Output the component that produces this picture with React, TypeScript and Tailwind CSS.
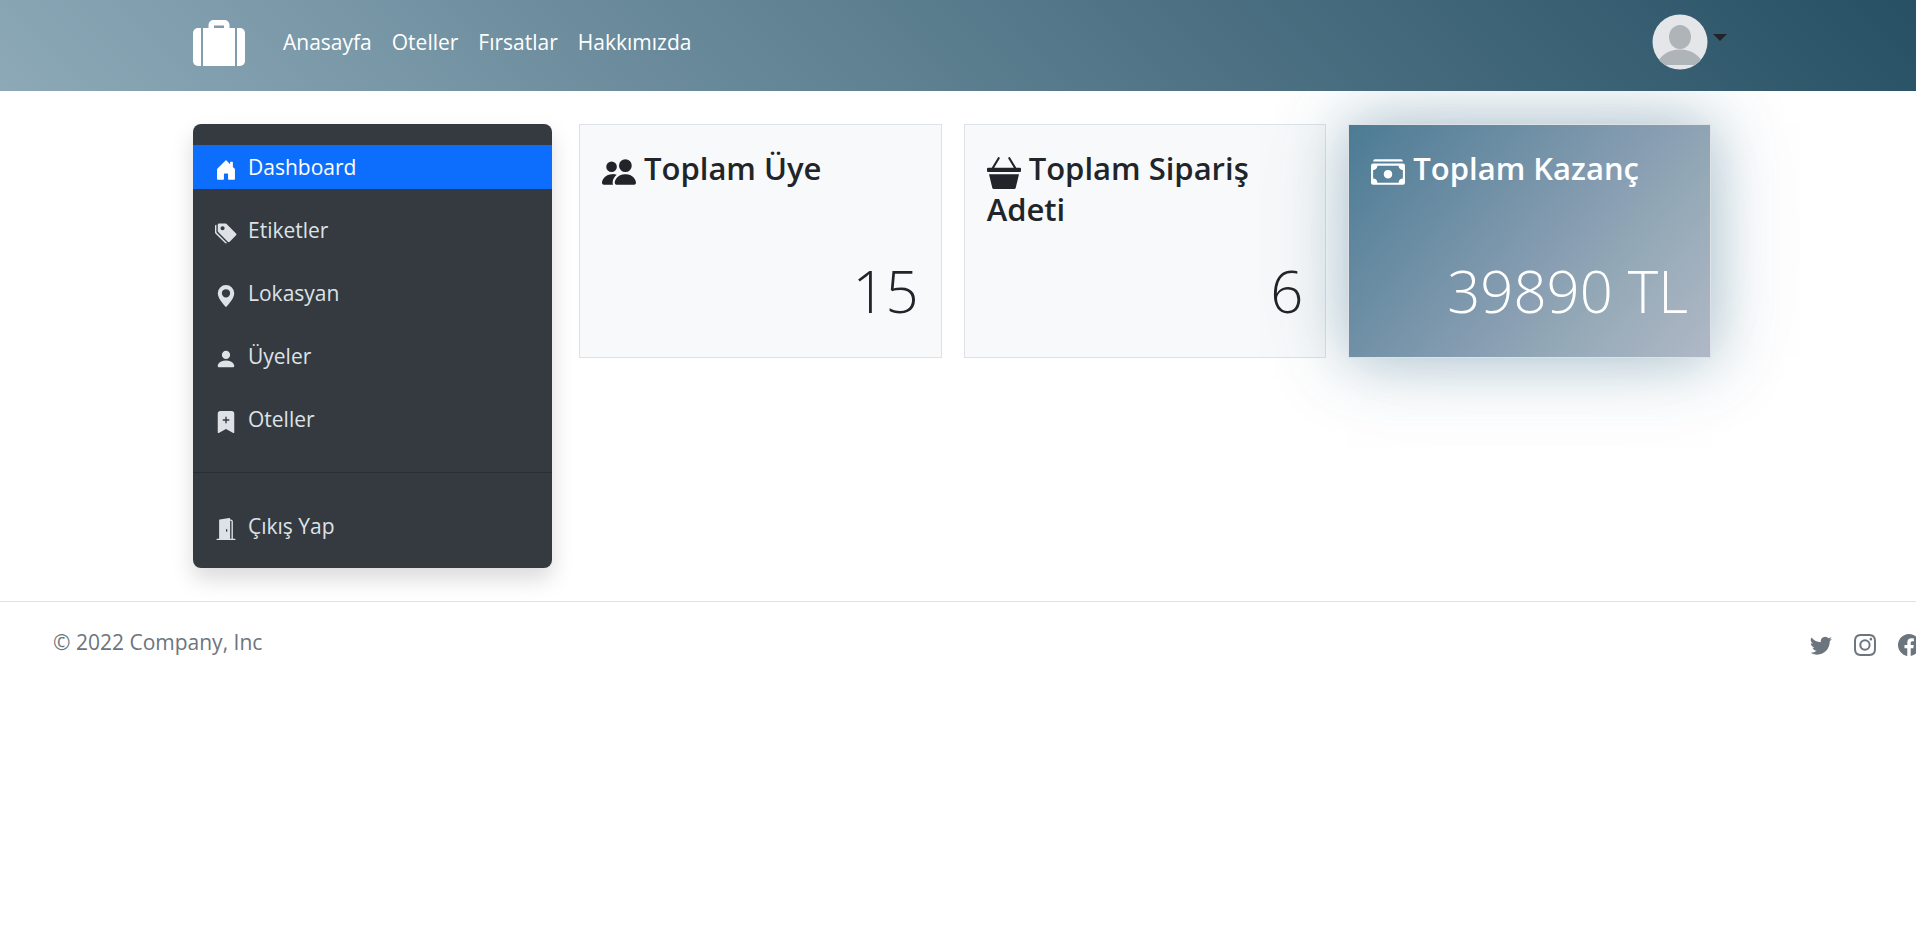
import {
  BsBasket3Fill,
  BsBookmarkPlusFill,
  BsCashStack,
  BsDoorOpenFill,
  BsFacebook,
  BsGeoAltFill,
  BsHouseDoorFill,
  BsInstagram,
  BsPeopleFill,
  BsPersonFill,
  BsTagsFill,
  BsTwitter,
} from "react-icons/bs";
import type { IconType } from "react-icons";

const navLinks = ["Anasayfa", "Oteller", "Fırsatlar", "Hakkımızda"];

const sideLinks: { label: string; icon: IconType; active?: boolean }[] = [
  { label: "Dashboard", icon: BsHouseDoorFill, active: true },
  { label: "Etiketler", icon: BsTagsFill },
  { label: "Lokasyan", icon: BsGeoAltFill },
  { label: "Üyeler", icon: BsPersonFill },
  { label: "Oteller", icon: BsBookmarkPlusFill },
];

const socials: { label: string; icon: IconType }[] = [
  { label: "Twitter", icon: BsTwitter },
  { label: "Instagram", icon: BsInstagram },
  { label: "Facebook", icon: BsFacebook },
];

function SuitcaseLogo() {
  return (
    <svg viewBox="0 0 52 46" className="h-[46px] w-[52px]" fill="currentColor" aria-hidden="true">
      <path d="M8 8H5a5 5 0 0 0-5 5v28a5 5 0 0 0 5 5h3z" />
      <path d="M44 8h3a5 5 0 0 1 5 5v28a5 5 0 0 1-5 5h-3z" />
      <path
        fillRule="evenodd"
        d="M10 8h5.500V5a5 5 0 0 1 5-5h11a5 5 0 0 1 5 5v3H42v38H10zM21 5.500V8h10V5.500z"
      />
    </svg>
  );
}

function Avatar() {
  return (
    <svg viewBox="0 0 56 56" className="size-14" aria-hidden="true">
      <clipPath id="avatar-circle">
        <circle cx="28" cy="28" r="27.500" />
      </clipPath>
      <g clipPath="url(#avatar-circle)">
        <rect width="56" height="56" fill="#e4e6e9" />
        <ellipse cx="28" cy="23" rx="11" ry="12" fill="#aeb4b7" />
        <path d="M5 51c2-9 11-15.500 23-15.500S49 42 51 51z" fill="#aeb4b7" />
      </g>
    </svg>
  );
}

function SideLink({ label, icon: Icon, active }: { label: string; icon: IconType; active?: boolean }) {
  return (
    <a
      href="#"
      className={
        active
          ? "flex h-11 items-center gap-[11px] bg-[#0d6efd] px-[22px] text-white"
          : "flex h-11 items-center gap-[11px] px-[22px] text-[#dee2e6]"
      }
    >
      <Icon className="mt-1.5 size-[22px] shrink-0" />
      {label}
    </a>
  );
}

function StatCard({
  title,
  value,
  icon: Icon,
  highlight,
}: {
  title: string;
  value: string;
  icon: IconType;
  highlight?: boolean;
}) {
  return (
    <section
      className={
        highlight
          ? "flex min-h-[234px] flex-col justify-between border border-[#dee2e6] bg-[linear-gradient(130deg,#4b7b94_0%,#8a9fb3_59%,#91a7b5_68%,#b0b8c6_100%)] bg-clip-padding px-[22px] pt-[23px] pb-[30px] text-white shadow-[0_0_60px_rgba(75,123,148,0.5),0_0_110px_rgba(75,123,148,0.08)]"
          : "flex min-h-[234px] flex-col justify-between border border-[#dee2e6] bg-[#f8f9fa] px-[22px] pt-[23px] pb-[30px] text-[#212529]"
      }
    >
      <h2 className="text-[31px] leading-[41px] font-semibold">
        <Icon className="mr-2 inline size-[34px] align-[-9px]" />
        {title}
      </h2>
      <p className="text-right text-[58px] leading-[72px] font-light">{value}</p>
    </section>
  );
}

export default function App() {
  return (
    <div className="overflow-x-hidden bg-white font-['Open_Sans','Noto_Sans',sans-serif] text-[21px] leading-[33px]">
      <header className="relative z-10 bg-[linear-gradient(45deg,#8da9b8,#275064)]">
        <div className="mx-auto flex h-[91px] max-w-[1530px] items-center justify-between pb-1.5">
          <div className="flex items-center gap-[38px]">
            <a href="#" aria-label="Anasayfa" className="text-white">
              <SuitcaseLogo />
            </a>
            <nav className="flex gap-5 text-white">
              {navLinks.map((label) => (
                <a key={label} href="#">
                  {label}
                </a>
              ))}
            </nav>
          </div>
          <button type="button" aria-label="Hesap" className="-mr-1 flex items-center gap-[5px] pb-0.5">
            <Avatar />
            <svg viewBox="0 0 14 7" className="mb-2 h-[7px] w-[14px]" fill="#212529" aria-hidden="true">
              <path d="M0 0h14L7 7z" />
            </svg>
          </button>
        </div>
      </header>

      <main className="mx-auto flex max-w-[1530px] items-start gap-[27px] pt-[33px] pb-[33px]">
        <aside className="w-[359px] shrink-0 rounded-lg bg-[#343a40] pt-[21px] pb-[20px] shadow-[0_11px_22px_rgba(0,0,0,0.15)]">
          <nav>
            <ul className="flex flex-col gap-[19px]">
              {sideLinks.map((link) => (
                <li key={link.label}>
                  <SideLink {...link} />
                </li>
              ))}
            </ul>
            <hr className="my-[31px] border-[#292e32]" />
            <SideLink label="Çıkış Yap" icon={BsDoorOpenFill} />
          </nav>
        </aside>
        <div className="mr-3 grid flex-1 grid-cols-3 gap-[22px]">
          <StatCard title="Toplam Üye" value="15" icon={BsPeopleFill} />
          <StatCard title="Toplam Sipariş Adeti" value="6" icon={BsBasket3Fill} />
          <StatCard title="Toplam Kazanç" value="39890 TL" icon={BsCashStack} highlight />
        </div>
      </main>

      <footer className="flex items-center justify-between border-t border-[#dee2e6] pt-6 pl-[53px] text-[#6c757d]">
        <p>© 2022 Company, Inc</p>
        <ul className="mt-1 -mr-1 flex gap-[22px]">
          {socials.map(({ label, icon: Icon }) => (
            <li key={label}>
              <a href="#" aria-label={label} className="block">
                <Icon className="size-[22px]" />
              </a>
            </li>
          ))}
        </ul>
      </footer>
    </div>
  );
}
